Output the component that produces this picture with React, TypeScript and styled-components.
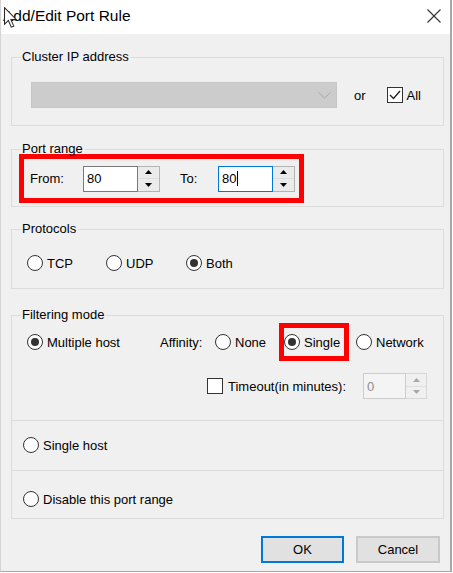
import React from 'react';
import styled, { createGlobalStyle } from 'styled-components';

const GlobalStyle = createGlobalStyle`
  html, body { margin: 0; padding: 0; background: #ffffff; }
  body {
    font-family: "Liberation Sans", Arial, sans-serif;
    font-size: 13px;
    color: #000;
  }
  * { box-sizing: border-box; }
`;

const Window = styled.div`
  position: relative;
  width: 452px;
  height: 572px;
  background: #f0f0f0;
  border-left: 1px solid #d4d4d4;
  border-right: 2px solid #a8a8a8;
  border-bottom: 1px solid #a8a8a8;
  display: flex;
  flex-direction: column;
`;

const TitleBar = styled.div`
  height: 34px;
  flex: none;
  background: #ffffff;
  display: flex;
  align-items: center;
  justify-content: space-between;
  padding: 0 9px 3px 2px;
`;

const Title = styled.div`
  font-size: 15.5px;
  line-height: 16px;
  color: #000;
`;

const CloseIcon = styled.svg`
  width: 14px;
  height: 14px;
  display: block;
`;

const Cursor = styled.svg`
  position: absolute;
  left: 2px;
  top: 7px;
  width: 15px;
  height: 21px;
`;

const Body = styled.div`
  padding: 16px 6px 0 10px;
  display: flex;
  flex-direction: column;
`;

const Group = styled.fieldset<{ $top?: number }>`
  margin: ${(p) => p.$top ?? 0}px 0 0 0;
  padding: 0;
  border: 1px solid #dcdcdc;
  min-width: 0;
`;

const Legend = styled.legend`
  margin-left: 9px;
  padding: 0 2px 0 1px;
  font-size: 13px;
  line-height: 14px;
`;

const ClusterRow = styled.div`
  display: flex;
  align-items: center;
  padding: 18px 0 17px 19px;
`;

const Combo = styled.div`
  width: 306px;
  height: 26px;
  background: #cccccc;
  border: 1px solid #c6c6c6;
  display: flex;
  align-items: center;
  justify-content: flex-end;
  padding-right: 5px;
`;

const Chevron = styled.svg`
  width: 13px;
  height: 7px;
  display: block;
`;

const OrText = styled.span`
  margin-left: 17px;
  line-height: 15px;
`;

const CheckOption = styled.label<{ $ml?: number }>`
  display: inline-flex;
  align-items: center;
  gap: 4px;
  margin-left: ${(p) => p.$ml ?? 0}px;
  line-height: 15px;
  white-space: nowrap;
`;

const Box = styled.span`
  width: 16px;
  height: 16px;
  border: 1px solid #333333;
  background: #ffffff;
  display: flex;
  align-items: center;
  justify-content: center;
  flex: none;
`;

const PortContent = styled.div`
  padding: 0 0 3px 7px;
`;

const Highlight = styled.div`
  border: 5px solid #ff0000;
  display: flex;
  align-items: center;
  flex: none;
`;

const PortHighlight = styled(Highlight)`
  width: 285px;
  height: 49px;
  margin-top: -2px;
  padding-left: 6px;
`;

const SingleHighlight = styled(Highlight)`
  width: 70px;
  height: 38px;
`;

const FieldLabel = styled.span<{ $w: number; $ml?: number }>`
  width: ${(p) => p.$w}px;
  margin-left: ${(p) => p.$ml ?? 0}px;
  flex: none;
  line-height: 15px;
  white-space: nowrap;
`;

type SpinState = 'normal' | 'focus' | 'disabled';

const Spin = styled.div<{ $w: number }>`
  display: flex;
  width: ${(p) => p.$w}px;
  height: 26px;
  flex: none;
`;

const SpinField = styled.div<{ $state: SpinState }>`
  flex: 1;
  display: flex;
  align-items: center;
  padding-left: 3px;
  line-height: 15px;
  background: ${(p) => (p.$state === 'disabled' ? '#f4f4f4' : '#ffffff')};
  color: ${(p) => (p.$state === 'disabled' ? '#8d8d8d' : '#000000')};
  border: 1px solid
    ${(p) =>
      p.$state === 'focus' ? '#0078d7' : p.$state === 'disabled' ? '#cccccc' : '#7a7a7a'};
`;

const Caret = styled.span`
  width: 1px;
  height: 15px;
  background: #000;
  margin-left: 1px;
`;

const SpinButtons = styled.div<{ $w: number; $disabled?: boolean }>`
  width: ${(p) => p.$w}px;
  display: flex;
  flex-direction: column;
  border: 1px solid ${(p) => (p.$disabled ? '#d6d6d6' : '#b4b4b4')};
  border-left: none;
  background: ${(p) => (p.$disabled ? '#f0f0f0' : '#ebebeb')};
`;

const SpinBtn = styled.div<{ $disabled?: boolean }>`
  flex: 1;
  display: flex;
  align-items: center;
  justify-content: center;
  & + & {
    border-top: 1px solid ${(p) => (p.$disabled ? '#dedede' : '#c4c4c4')};
  }
`;

const Arrow = styled.svg`
  width: 7px;
  height: 4px;
  display: block;
`;

const ProtocolRow = styled.div`
  display: flex;
  align-items: center;
  padding: 19px 0 17px 15px;
`;

const Option = styled.label<{ $w?: number; $ml?: number }>`
  display: inline-flex;
  align-items: center;
  gap: 4px;
  flex: none;
  width: ${(p) => (p.$w ? `${p.$w}px` : 'auto')};
  margin-left: ${(p) => p.$ml ?? 0}px;
  line-height: 15px;
  white-space: nowrap;
`;

const Radio = styled.span<{ $on?: boolean }>`
  width: 16px;
  height: 16px;
  border-radius: 50%;
  border: 1px solid #333333;
  background: #ffffff;
  flex: none;
  display: flex;
  align-items: center;
  justify-content: center;
  &::after {
    content: '';
    width: 8px;
    height: 8px;
    border-radius: 50%;
    background: #333333;
    display: ${(p) => (p.$on ? 'block' : 'none')};
  }
`;

const FilterMain = styled.div`
  padding: 1px 0 21px 15px;
  display: flex;
  flex-direction: column;
`;

const AffinityRow = styled.div`
  display: flex;
  align-items: center;
  height: 38px;
`;

const TimeoutRow = styled.div`
  display: flex;
  align-items: center;
  height: 26px;
  margin-top: 12px;
  padding-left: 180px;
`;

const HostSection = styled.div<{ $pt: number; $pb: number }>`
  border-top: 1px solid #dcdcdc;
  padding: ${(p) => p.$pt}px 0 ${(p) => p.$pb}px 11px;
  display: flex;
  align-items: center;
`;

const ButtonRow = styled.div`
  display: flex;
  justify-content: flex-end;
  gap: 12px;
  margin-top: 17px;
  padding-right: 4px;
`;

const Button = styled.button<{ $w: number; $default?: boolean }>`
  width: ${(p) => p.$w}px;
  height: 27px;
  padding: 0;
  background: #e1e1e1;
  border: ${(p) => (p.$default ? '2px solid #0078d7' : '2px solid #c9c9c9')};
  font-family: inherit;
  font-size: 13px;
  color: #000;
`;

const Up = ({ color }: { color: string }) => (
  <Arrow viewBox="0 0 7 4">
    <polygon points="3.5,0 7,4 0,4" fill={color} />
  </Arrow>
);

const Down = ({ color }: { color: string }) => (
  <Arrow viewBox="0 0 7 4">
    <polygon points="0,0 7,0 3.5,4" fill={color} />
  </Arrow>
);

const SpinBox = ({
  w,
  bw,
  value,
  state,
}: {
  w: number;
  bw: number;
  value: string;
  state: SpinState;
}) => {
  const disabled = state === 'disabled';
  const c = disabled ? '#a8a8a8' : '#000000';
  return (
    <Spin $w={w}>
      <SpinField $state={state}>
        {value}
        {state === 'focus' && <Caret />}
      </SpinField>
      <SpinButtons $w={bw} $disabled={disabled}>
        <SpinBtn $disabled={disabled}>
          <Up color={c} />
        </SpinBtn>
        <SpinBtn $disabled={disabled}>
          <Down color={c} />
        </SpinBtn>
      </SpinButtons>
    </Spin>
  );
};

export default function App() {
  return (
    <>
      <GlobalStyle />
      <Window>
        <TitleBar>
          <Title>Add/Edit Port Rule</Title>
          <CloseIcon viewBox="0 0 14 14">
            <line x1="0.5" y1="0.5" x2="13.5" y2="13.5" stroke="#333" strokeWidth="1.1" />
            <line x1="13.5" y1="0.5" x2="0.5" y2="13.5" stroke="#333" strokeWidth="1.1" />
          </CloseIcon>
        </TitleBar>

        <Body>
          <Group>
            <Legend>Cluster IP address</Legend>
            <ClusterRow>
              <Combo>
                <Chevron viewBox="0 0 13 7">
                  <polyline points="0.5,0.5 6.5,6 12.5,0.5" fill="none" stroke="#a9a9a9" strokeWidth="1" />
                </Chevron>
              </Combo>
              <OrText>or</OrText>
              <CheckOption $ml={21}>
                <Box>
                  <svg width="12" height="10" viewBox="0 0 12 10">
                    <polyline points="1,5 4.5,8.5 11,1" fill="none" stroke="#222" strokeWidth="1.4" />
                  </svg>
                </Box>
                All
              </CheckOption>
            </ClusterRow>
          </Group>

          <Group $top={16}>
            <Legend>Port range</Legend>
            <PortContent>
              <PortHighlight>
                <FieldLabel $w={53}>From:</FieldLabel>
                <SpinBox w={77} bw={22} value="80" state="normal" />
                <FieldLabel $w={38} $ml={20}>To:</FieldLabel>
                <SpinBox w={77} bw={22} value="80" state="focus" />
              </PortHighlight>
            </PortContent>
          </Group>

          <Group $top={15}>
            <Legend>Protocols</Legend>
            <ProtocolRow>
              <Option $w={79}>
                <Radio />
                TCP
              </Option>
              <Option $w={80}>
                <Radio />
                UDP
              </Option>
              <Option>
                <Radio $on />
                Both
              </Option>
            </ProtocolRow>
          </Group>

          <Group $top={19}>
            <Legend>Filtering mode</Legend>
            <FilterMain>
              <AffinityRow>
                <Option $w={133}>
                  <Radio $on />
                  Multiple host
                </Option>
                <FieldLabel $w={55}>Affinity:</FieldLabel>
                <Option $w={64}>
                  <Radio />
                  None
                </Option>
                <SingleHighlight>
                  <Option>
                    <Radio $on />
                    Single
                  </Option>
                </SingleHighlight>
                <Option $ml={7}>
                  <Radio />
                  Network
                </Option>
              </AffinityRow>
              <TimeoutRow>
                <CheckOption>
                  <Box />
                </CheckOption>
                <FieldLabel $w={135} $ml={5}>Timeout(in minutes):</FieldLabel>
                <SpinBox w={64} bw={21} value="0" state="disabled" />
              </TimeoutRow>
            </FilterMain>
            <HostSection $pt={16} $pb={17}>
              <Option>
                <Radio />
                Single host
              </Option>
            </HostSection>
            <HostSection $pt={20} $pb={11}>
              <Option>
                <Radio />
                Disable this port range
              </Option>
            </HostSection>
          </Group>

          <ButtonRow>
            <Button $w={83} $default>
              OK
            </Button>
            <Button $w={84}>Cancel</Button>
          </ButtonRow>
        </Body>

        <Cursor viewBox="0 0 12.6 20">
          <polygon
            points="0.6,0.6 0.6,16.4 4.3,12.8 7,19.2 9.4,18.2 6.7,12 11.9,12"
            fill="#ffffff"
            stroke="#2a2a2a"
            strokeWidth="1"
            strokeLinejoin="miter"
          />
        </Cursor>
      </Window>
    </>
  );
}
